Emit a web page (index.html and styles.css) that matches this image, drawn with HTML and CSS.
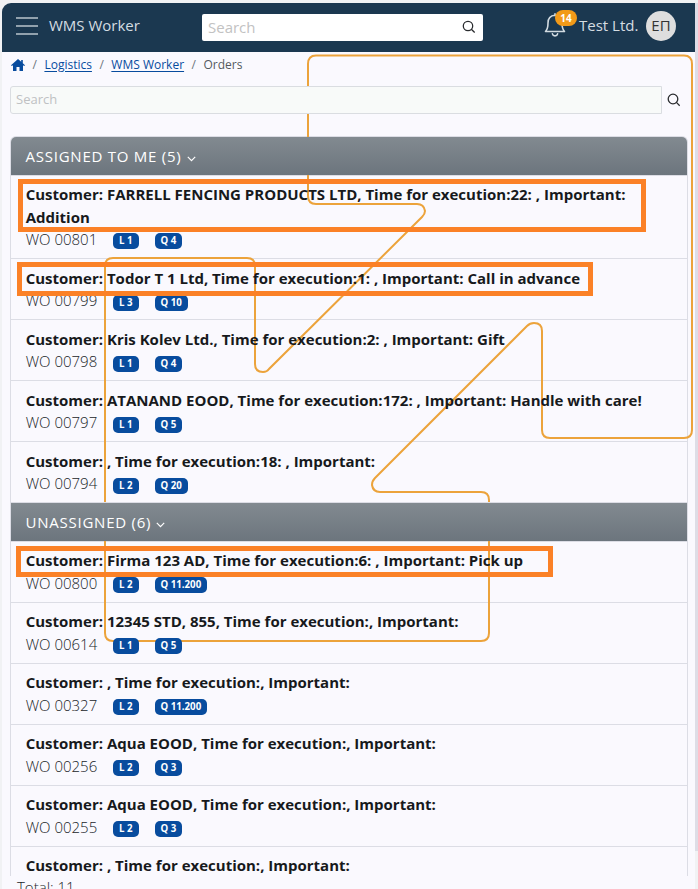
FILE: index.html
```html
<!DOCTYPE html>
<html lang="en">
<head>
<meta charset="utf-8">
<title>WMS Worker</title>
<link rel="stylesheet" href="styles.css">
</head>
<body>
<div class="app">
  <header class="topbar">
    <svg class="menu" width="22" height="18" viewBox="0 0 22 18"><path d="M0 1h22M0 9h22M0 17h22"/></svg>
    <div class="title"><span>WMS Worker</span></div>
    <div class="top-search"><span>Search</span>
      <svg class="lens" width="14" height="14" viewBox="0 0 14 14"><circle cx="6" cy="6" r="4.7"/><path d="M9.3 9.3l3.4 3.2"/></svg>
    </div>
    <div class="bell">
      <svg width="22" height="24" viewBox="0 0 22 24"><path d="M11 2V.8M1.5 18.5C3.5 16.500 4 14.500 4 10C4 5 6.500 2.500 11 2.200C15.500 2.500 18 5 18 10C18 14.500 18.500 16.500 20.500 18.500Z"/><path d="M8.400 20.800C9 23.500 13 23.500 13.600 20.800"/></svg>
      <b class="count">14</b>
    </div>
    <div class="company"><span>Test Ltd.</span></div>
    <div class="avatar">ЕП</div>
  </header>
  <main class="page">
    <nav class="crumbs">
      <svg width="14" height="12" viewBox="0 0 14 12"><path d="M7 0L0 6.200l.8.8L2 6.200V12h3.500V8h3v4H12V6.200l1.200.8.8-.8-2.200-2V1h-1.600v1.800z"/></svg>
      <i>/</i><a>Logistics</a><i>/</i><a>WMS Worker</a><i>/</i><span>Orders</span>
    </nav>
    <div class="filter">
      <div class="field">Search</div>
      <svg class="lens" width="14" height="14" viewBox="0 0 14 14"><circle cx="6" cy="6" r="4.800"/><path d="M9.400 9.400l3.300 3.300"/></svg>
    </div>
    <div class="list">
      <h2>ASSIGNED TO ME (5) <svg width="9" height="6" viewBox="0 0 9 6"><path d="M.8.8l3.700 3.800L8.200.8"/></svg></h2>
      <div class="row first"><p>Customer: FARRELL FENCING PRODUCTS LTD, Time for execution:22: , Important: Addition</p><div class="sub"><span>WO 00801</span><b>L 1</b><b>Q 4</b></div></div>
      <div class="row"><p>Customer: Todor T 1 Ltd, Time for execution:1: , Important: Call in advance</p><div class="sub"><span>WO 00799</span><b>L 3</b><b>Q 10</b></div></div>
      <div class="row"><p>Customer: Kris Kolev Ltd., Time for execution:2: , Important: Gift</p><div class="sub"><span>WO 00798</span><b>L 1</b><b>Q 4</b></div></div>
      <div class="row"><p>Customer: ATANAND EOOD, Time for execution:172: , Important: Handle with care!</p><div class="sub"><span>WO 00797</span><b>L 1</b><b>Q 5</b></div></div>
      <div class="row"><p>Customer: , Time for execution:18: , Important:</p><div class="sub"><span>WO 00794</span><b>L 2</b><b>Q 20</b></div></div>
      <h2>UNASSIGNED (6) <svg width="9" height="6" viewBox="0 0 9 6"><path d="M.8.8l3.700 3.800L8.200.8"/></svg></h2>
      <div class="row open"><p>Customer: Firma 123 AD, Time for execution:6: , Important: Pick up</p><div class="sub"><span>WO 00800</span><b>L 2</b><b>Q 11.200</b></div></div>
      <div class="row open"><p>Customer: 12345 STD, 855, Time for execution:, Important:</p><div class="sub"><span>WO 00614</span><b>L 1</b><b>Q 5</b></div></div>
      <div class="row open"><p>Customer: , Time for execution:, Important:</p><div class="sub"><span>WO 00327</span><b>L 2</b><b>Q 11.200</b></div></div>
      <div class="row open"><p>Customer: Aqua EOOD, Time for execution:, Important:</p><div class="sub"><span>WO 00256</span><b>L 2</b><b>Q 3</b></div></div>
      <div class="row open"><p>Customer: Aqua EOOD, Time for execution:, Important:</p><div class="sub"><span>WO 00255</span><b>L 2</b><b>Q 3</b></div></div>
      <div class="row open"><p>Customer: , Time for execution:, Important:</p></div>
    </div>
    <div class="total">Total: 11</div>
  </main>
</div>
<svg class="watermark" width="698" height="889" viewBox="0 0 698 889"><path d="M316 55.500H684Q692 55.500 692 64V430Q692 438 684 438H550Q542 438 542 430V331Q542 323 534 323Q530 323 527 326L375 478Q372 481 372 485Q373 492 380 492H481Q489 492 489 500V633Q489 641 481 641H113Q105 641 105 633V266Q105 258 113 258H247Q255 258 255 266V364Q255 372 263 372Q267 372 269 369L422 217Q425 214 425 211Q424 204 417 204H316Q308 204 308 196V64Q308 55.500 316 55.500Z"/></svg>
<div class="mark mark-farrell"></div>
<div class="mark mark-todor"></div>
<div class="mark mark-firma"></div>
<div class="scrollbar"></div>
</body>
</html>
```
FILE: styles.css
```css
* { box-sizing: border-box; }
body { margin: 0; height: 889px; overflow: hidden; background: #f1f2f4; font-family: "Open Sans", sans-serif; font-size: 15px; line-height: 22.5px; color: #212529; }
.app { margin: 3px 3px 0 2px; height: 886px; border-radius: 9px 0 0 0; overflow: hidden; background: #faf9fe; }
.topbar { height: 49px; background: #1b3850; display: flex; align-items: center; padding: 0 19px 3px 14px; color: #d5dde2; }
.menu { fill: none; stroke: #91a1ad; stroke-width: 2; margin: -1px 11px 0 0; }
.title { width: 153px; white-space: nowrap; font-size: 15px; margin-top: -1px; }
.top-search { width: 281px; height: 27px; background: #fff; border-radius: 2px; display: flex; align-items: center; justify-content: space-between; padding: 0 7px 0 6px; color: #c2c2c2; margin-top: 2px; }
.lens { fill: none; stroke: #292b2e; stroke-width: 1.300; position: relative; z-index: 3; }
.bell { position: relative; width: 22px; height: 24px; margin: -2px 0 0 61px; }
.bell svg { display: block; fill: none; stroke: #d1dae0; stroke-width: 1.600; stroke-linejoin: round; stroke-linecap: round; }
.count { position: absolute; left: 11px; top: -3px; width: 22px; height: 16px; border-radius: 8px; background: #f29a19; color: #fff; font-size: 10px; line-height: 16px; text-align: center; }
.company { width: 67px; margin: -1px 0 0 13px; white-space: nowrap; font-size: 15px; }
.avatar { width: 30px; height: 30px; border-radius: 50%; background: #dedede; color: #333; text-align: center; line-height: 29px; flex: none; }
.page { padding: 0 8px; }
.crumbs { height: 34px; padding: 0 0 8px 1px; display: flex; align-items: center; font-size: 12px; color: #55595e; }
.crumbs svg { fill: #084c9e; }
.crumbs i { font-style: normal; margin: 0 7.5px; color: #6c757d; }
.crumbs a { color: #084c9e; text-decoration: underline; text-underline-offset: 2px; }
.filter { height: 28px; display: flex; align-items: center; gap: 5px; position: relative; z-index: 3; }
.field { width: 652px; height: 28px; border: 1px solid #dadde1; border-radius: 3px 0 0 3px; background: #f8faf9; color: #bfc1c3; font-size: 13px; line-height: 25px; padding-left: 5px; }
.list { width: 678px; height: 740px; margin-top: 22px; border: 1px solid #dcdde5; border-bottom: 0; border-radius: 6px 6px 0 0; overflow: hidden; }
.list h2 { position: relative; z-index: 3; margin: 0; height: 38px; padding-left: 14.6px; background: linear-gradient(#828a90, #6c757d); color: #fff; font-size: 15px; font-weight: 400; line-height: 38px; letter-spacing: .75px; }
.list h2 svg { fill: none; stroke: #fff; stroke-width: 1.200; margin-left: .5px; }
.row { border-top: 1px solid #dcdde5; padding: 8px 15px 7px 14.7px; min-height: 61px; }
.row.first { padding-top: 7px; height: 83px; }
.row.open { padding-top: 7px; }
.row.open .sub { margin-top: .5px; }
.row + h2 { border-top: 1px solid #dcdde5; height: 39px; }
.row p { margin: 0; font-weight: 700; color: #17191c; width: 635px; position: relative; z-index: 2; }
.sub { display: flex; align-items: center; height: 22px; font-weight: 300; position: relative; z-index: 2; }
.sub span { width: 87.300px; }
.sub b { background: #084c9e; color: #fff; font-size: 9.700px; font-weight: 700; line-height: 16px; height: 16px; border-radius: 5px; padding: 0 6px; margin-right: 16px; margin-top: 4px; }
.total { padding-left: 7px; font-weight: 300; line-height: 22px; }
.watermark { position: absolute; left: 0; top: 0; z-index: 1; fill: none; stroke: #eca33b; stroke-width: 2; }
.mark { position: absolute; z-index: 4; border: 5px solid #fb8127; }
.mark-farrell { left: 18px; top: 179px; width: 628px; height: 53px; }
.mark-todor { left: 17px; top: 262px; width: 576px; height: 34px; }
.mark-firma { left: 16px; top: 546px; width: 537px; height: 31px; }
.scrollbar { position: absolute; right: 0; top: 3px; width: 3px; height: 848px; background: #dedde6; }
```
